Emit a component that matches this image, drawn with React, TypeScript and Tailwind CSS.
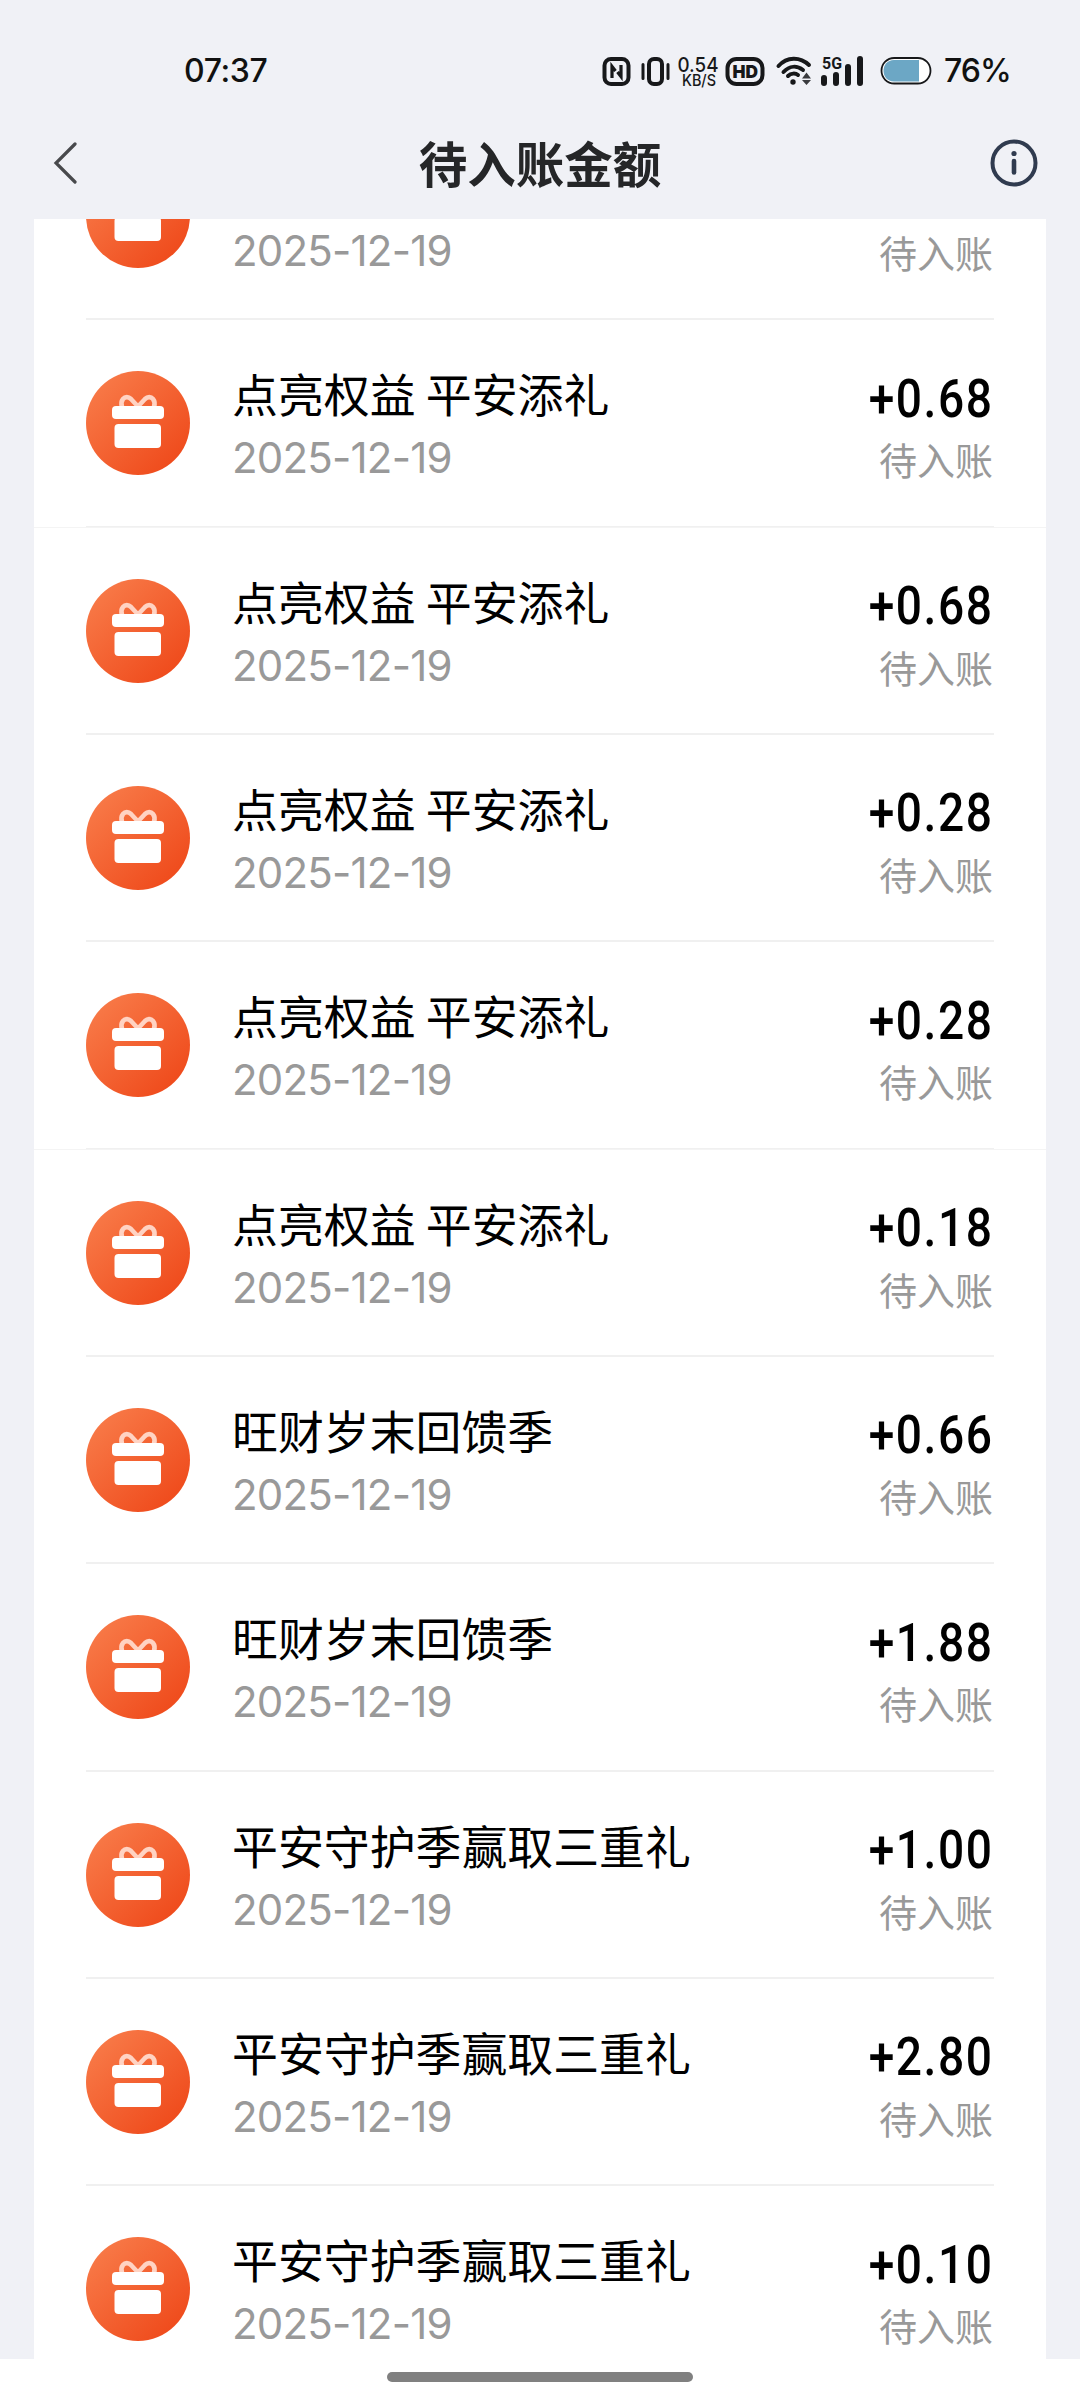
type Entry = { title: string; amount: string; wide?: boolean };

const entries: Entry[] = [
  { title: '点亮权益 平安添礼', amount: '+0.68' },
  { title: '点亮权益 平安添礼', amount: '+0.68', wide: true },
  { title: '点亮权益 平安添礼', amount: '+0.68' },
  { title: '点亮权益 平安添礼', amount: '+0.28' },
  { title: '点亮权益 平安添礼', amount: '+0.28', wide: true },
  { title: '点亮权益 平安添礼', amount: '+0.18' },
  { title: '旺财岁末回馈季', amount: '+0.66' },
  { title: '旺财岁末回馈季', amount: '+1.88' },
  { title: '平安守护季赢取三重礼', amount: '+1.00' },
  { title: '平安守护季赢取三重礼', amount: '+2.80' },
  { title: '平安守护季赢取三重礼', amount: '+0.10' },
];

function GiftIcon() {
  return (
    <svg className="block size-[104px] shrink-0" viewBox="0 0 104 104">
      <defs>
        <linearGradient id="gift" x1="0.1" y1="0.1" x2="0.85" y2="0.9">
          <stop offset="0" stopColor="#f87a48" />
          <stop offset="1" stopColor="#ef4b1c" />
        </linearGradient>
      </defs>
      <circle cx="52" cy="52" r="52" fill="url(#gift)" />
      <path
        d="M52 35.500L45 28C42.500 25.500 39 25.500 37 28C35 30.500 35 33 36 36M52 35.500L59 28C61.500 25.500 65 25.500 67 28C69 30.500 69 33 68 36"
        fill="none"
        stroke="#ffd3c3"
        strokeWidth="4.600"
      />
      <rect x="26" y="35" width="52" height="13" rx="4" fill="#fff" />
      <rect x="28.500" y="53" width="46.500" height="24" rx="4" fill="#fff" />
    </svg>
  );
}

function Row({ title, amount, wide }: Entry) {
  return (
    <li className="relative flex h-[207.33px] shrink-0 px-[52px] pt-[52px]">
      <GiftIcon />
      <div className="ml-[42px] flex flex-1 flex-col">
        <span className="-mt-[9px] h-[60px] text-[45.900px] leading-[60px] whitespace-nowrap text-black">{title}</span>
        <span className="mt-[6px] h-[60px] font-['Inter','Liberation_Sans',sans-serif] text-[42px] leading-[60px] tracking-[-0.800px] text-[#999]">
          2025-12-19
        </span>
      </div>
      <div className="flex flex-col items-end">
        <span className="-mt-[2.500px] h-[60px] origin-right scale-x-[0.87] font-['Roboto',sans-serif] text-[53px] leading-[60px] font-medium tracking-[1.800px] text-black">
          {amount}
        </span>
        <span className="mt-[0.500px] mr-[1px] h-[60px] text-[38px] leading-[60px] text-[#999]">待入账</span>
      </div>
      <div className="absolute inset-x-[52px] -bottom-px h-[2px] bg-[#f0f0f0]" />
      {wide && <div className="absolute inset-x-0 -bottom-px h-px bg-[#f4f4f4]" />}
    </li>
  );
}

function StatusIcons() {
  return (
    <svg className="block h-[60px] w-[340px]" viewBox="600 40 340 60" fill="none" stroke="#17181a">
      <rect x="604.500" y="59" width="24" height="25" rx="6.500" strokeWidth="4" />
      <path d="M612 78V66.500L615.500 71M621 65V76.500L617.500 72" strokeWidth="3.200" />
      <rect x="649" y="59" width="13" height="25" rx="5" strokeWidth="4" />
      <path d="M643 64.500V78.500M668 64.500V78.500" strokeWidth="3" strokeLinecap="round" />
      <g fill="#17181a" stroke="none" className="font-['Inter',sans-serif]">
        <text x="677.500" y="72" fontSize="20" textLength="41" lengthAdjust="spacingAndGlyphs" fontWeight="500">0.54</text>
        <text x="682" y="86" fontSize="15.500" textLength="34" lengthAdjust="spacingAndGlyphs" fontWeight="500">KB/S</text>
        <text x="732.500" y="78" fontSize="18" fontWeight="900" textLength="25.500" lengthAdjust="spacingAndGlyphs">HD</text>
        <text x="822" y="68.500" fontSize="17" fontWeight="700" textLength="20" lengthAdjust="spacingAndGlyphs" className="font-['Roboto',sans-serif]">5G</text>
      </g>
      <rect x="727.500" y="59" width="35" height="25" rx="9" strokeWidth="4" />
      <path d="M778.500 66C787 56.500 800 56.500 809 65M783.500 72C789.500 65.500 797 65.500 803 70M788 76C791 73 795.500 73 798 75" strokeWidth="4" strokeLinecap="round" />
      <circle cx="793" cy="82" r="2.700" fill="#17181a" stroke="none" />
      <path d="M802 78.500L806.500 72.500L811 78.500ZM802 80L806.500 85L811 80Z" fill="#3a3b3e" stroke="none" />
      <path d="M824 78V83M836 75V83M848 67V83M860 59V83" strokeWidth="6" strokeLinecap="round" />
      <rect x="881.500" y="58" width="49" height="25.500" rx="12.700" fill="#fff" strokeWidth="1.800" />
      <path d="M919 60V81.500H894C887 81.500 883.500 76 883.500 70.700S887 60 894 60Z" fill="#6ca7c5" stroke="none" />
    </svg>
  );
}

export default function App() {
  return (
    <div className="flex h-[2400px] w-[1080px] flex-col overflow-hidden bg-white font-['Noto_Sans_CJK_SC',sans-serif]">
      <div className="flex h-[2358.500px] flex-col bg-[#f0f1f6]">
        <header className="shrink-0">
          <div className="flex h-[100px] items-end font-['Inter',sans-serif] text-[32px] font-[450] text-[#111]">
            <span className="ml-[184px] h-[60px] w-[82px] leading-[62px] tracking-[-0.400px]">07:37</span>
            <div className="ml-[334px]">
              <StatusIcons />
            </div>
            <span className="ml-[4px] h-[60px] leading-[62px] tracking-[-1px]">76%</span>
          </div>
          <div className="flex h-[119px] items-start justify-between pr-[42px] pl-[52px]">
            <svg className="mt-[42px] block h-[42px] w-[48px]" viewBox="0 0 48 42" fill="none">
              <path d="M23 2L4 21L23 40" stroke="#48494c" strokeWidth="3.200" strokeLinecap="round" />
            </svg>
            <h1 className="mt-[26px] mr-[10px] h-[72px] text-[48.500px] leading-[72px] font-bold text-[#252628]">待入账金额</h1>
            <svg className="mt-[39px] block size-[48px]" viewBox="0 0 48 48" fill="none">
              <circle cx="24" cy="24" r="21.500" stroke="#303b4f" strokeWidth="4" />
              <circle cx="24" cy="14.500" r="2.600" fill="#303b4f" />
              <path d="M24 22V33.500" stroke="#303b4f" strokeWidth="4.600" strokeLinecap="round" />
            </svg>
          </div>
        </header>
        <main className="mx-[34px] min-h-0 flex-1 overflow-hidden bg-white">
          <ul className="-mt-[107px] flex flex-col">
            {entries.map((entry, i) => (
              <Row key={i} {...entry} />
            ))}
          </ul>
        </main>
      </div>
      <div className="mx-auto mt-[13.500px] h-[10px] w-[306px] rounded-full bg-[#808080]" />
    </div>
  );
}
